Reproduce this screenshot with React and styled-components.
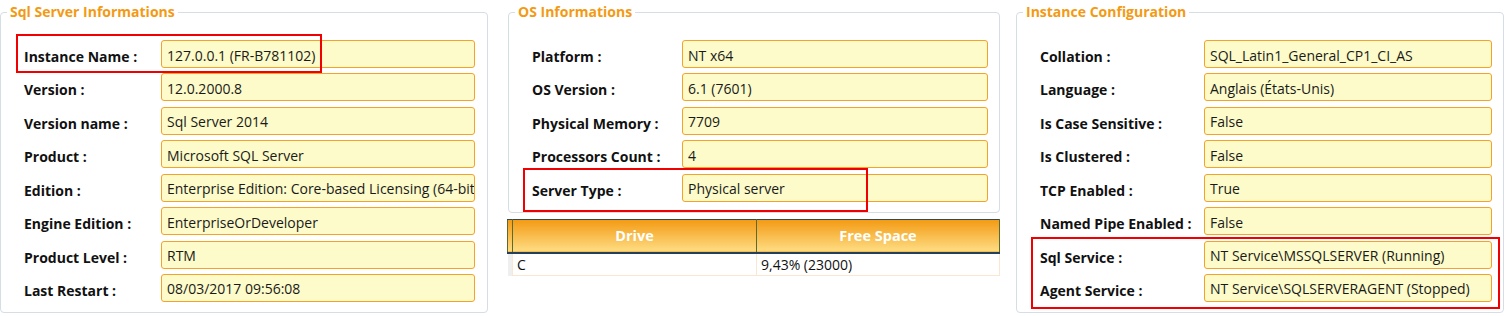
import React from "react";
import styled, { createGlobalStyle } from "styled-components";

const GlobalStyle = createGlobalStyle`
  html, body { margin: 0; padding: 0; background: #ffffff; }
  body { font-family: "Open Sans", "Noto Sans", sans-serif; color: #111; }
`;

const Page = styled.div`
  display: flex;
  align-items: flex-start;
  width: 1504px;
  height: 316px;
  overflow: hidden;
`;

const Column = styled.div`
  position: relative;
  display: flex;
  flex-direction: column;
  width: ${(p) => p.$width}px;
  margin-left: ${(p) => p.$offset || 0}px;
  flex: none;
`;

const Panel = styled.fieldset`
  margin: 0;
  padding: 0;
  border: 1px solid #d5dde5;
  border-radius: 4px;
  min-width: 0;
`;

const Legend = styled.legend`
  margin-left: 6px;
  padding: 0 3px;
  font-size: 14px;
  line-height: 24px;
  font-weight: 700;
  color: #f39a14;
`;

const Body = styled.div`
  display: flex;
  flex-direction: column;
  gap: 5.43px;
  padding: 16px ${(p) => p.$right}px 10px 23px;
`;

const Row = styled.div`
  display: grid;
  grid-template-columns: ${(p) => p.$labelWidth}px 1fr;
  align-items: center;
`;

const Label = styled.div`
  font-size: 14px;
  font-weight: 700;
  color: #111;
  padding-top: 5px;
  white-space: nowrap;
`;

const Field = styled.div`
  height: 28px;
  box-sizing: border-box;
  display: flex;
  align-items: center;
  padding: 2px 5px 0;
  border: 1px solid #f5a22a;
  border-radius: 3px;
  background: #fdfbc9;
  font-size: 14px;
  color: #1a1a1a;
  white-space: nowrap;
  overflow: hidden;
`;

const Highlight = styled.div`
  position: absolute;
  left: ${(p) => p.$x}px;
  top: ${(p) => p.$y}px;
  width: ${(p) => p.$w}px;
  height: ${(p) => p.$h}px;
  box-sizing: border-box;
  border: 2px solid #f00000;
  pointer-events: none;
`;

const Grid = styled.table`
  margin-top: 6px;
  margin-left: -1px;
  width: 493px;
  border-collapse: collapse;
  table-layout: fixed;
  font-size: 14px;
`;

const HeadCell = styled.th`
  height: 34px;
  padding: 0;
  box-sizing: border-box;
  background: linear-gradient(#f39a12, #fedd84);
  border-top: 1px solid #2f4a60;
  border-bottom: 2px solid #24405a;
  border-left: 1px solid #5b6b2c;
  border-right: 1px solid #5b6b2c;
  color: #ffffff;
  font-size: 14.5px;
  font-weight: 700;
  text-align: center;
  width: ${(p) => (p.$w ? `${p.$w}px` : "auto")};
`;

const RowHead = styled.td`
  background: #efefef;
  border-right: 1px solid #fbe6d2;
  padding: 0;
`;

const Cell = styled.td`
  height: 21px;
  padding: 0 4px;
  border: 1px solid #fbe6d2;
  border-top: none;
  color: #111;
  white-space: nowrap;
`;

const sqlRows = [
  ["Instance Name :", "127.0.0.1 (FR-B781102)"],
  ["Version :", "12.0.2000.8"],
  ["Version name :", "Sql Server 2014"],
  ["Product :", "Microsoft SQL Server"],
  ["Edition :", "Enterprise Edition: Core-based Licensing (64-bit)"],
  ["Engine Edition :", "EnterpriseOrDeveloper"],
  ["Product Level :", "RTM"],
  ["Last Restart :", "08/03/2017 09:56:08"],
];

const osRows = [
  ["Platform :", "NT x64"],
  ["OS Version :", "6.1 (7601)"],
  ["Physical Memory :", "7709"],
  ["Processors Count :", "4"],
  ["Server Type :", "Physical server"],
];

const instRows = [
  ["Collation :", "SQL_Latin1_General_CP1_CI_AS"],
  ["Language :", "Anglais (États-Unis)"],
  ["Is Case Sensitive :", "False"],
  ["Is Clustered :", "False"],
  ["TCP Enabled :", "True"],
  ["Named Pipe Enabled :", "False"],
  ["Sql Service :", "NT Service\\MSSQLSERVER (Running)"],
  ["Agent Service :", "NT Service\\SQLSERVERAGENT (Stopped)"],
];

function InfoPanel({ title, rows, labelWidth, right }) {
  return (
    <Panel>
      <Legend>{title}</Legend>
      <Body $right={right}>
        {rows.map(([l, v]) => (
          <Row key={l} $labelWidth={labelWidth}>
            <Label>{l}</Label>
            <Field>{v}</Field>
          </Row>
        ))}
      </Body>
    </Panel>
  );
}

export default function App() {
  return (
    <>
      <GlobalStyle />
      <Page>
        <Column $width={488}>
          <InfoPanel title="Sql Server Informations" rows={sqlRows} labelWidth={137} right={12} />
          <Highlight $x={16} $y={34} $w={306} $h={39} />
        </Column>
        <Column $width={492} $offset={20}>
          <InfoPanel title="OS Informations" rows={osRows} labelWidth={150} right={11} />
          <Grid>
            <thead>
              <tr>
                <HeadCell $w={5} />
                <HeadCell $w={244}>Drive</HeadCell>
                <HeadCell>Free Space</HeadCell>
              </tr>
            </thead>
            <tbody>
              <tr>
                <RowHead />
                <Cell>C</Cell>
                <Cell>9,43% (23000)</Cell>
              </tr>
            </tbody>
          </Grid>
          <Highlight $x={15} $y={168} $w={345} $h={44} />
        </Column>
        <Column $width={488} $offset={16}>
          <InfoPanel title="Instance Configuration" rows={instRows} labelWidth={164} right={11} />
          <Highlight $x={15} $y={237} $w={469} $h={72} />
        </Column>
      </Page>
    </>
  );
}
